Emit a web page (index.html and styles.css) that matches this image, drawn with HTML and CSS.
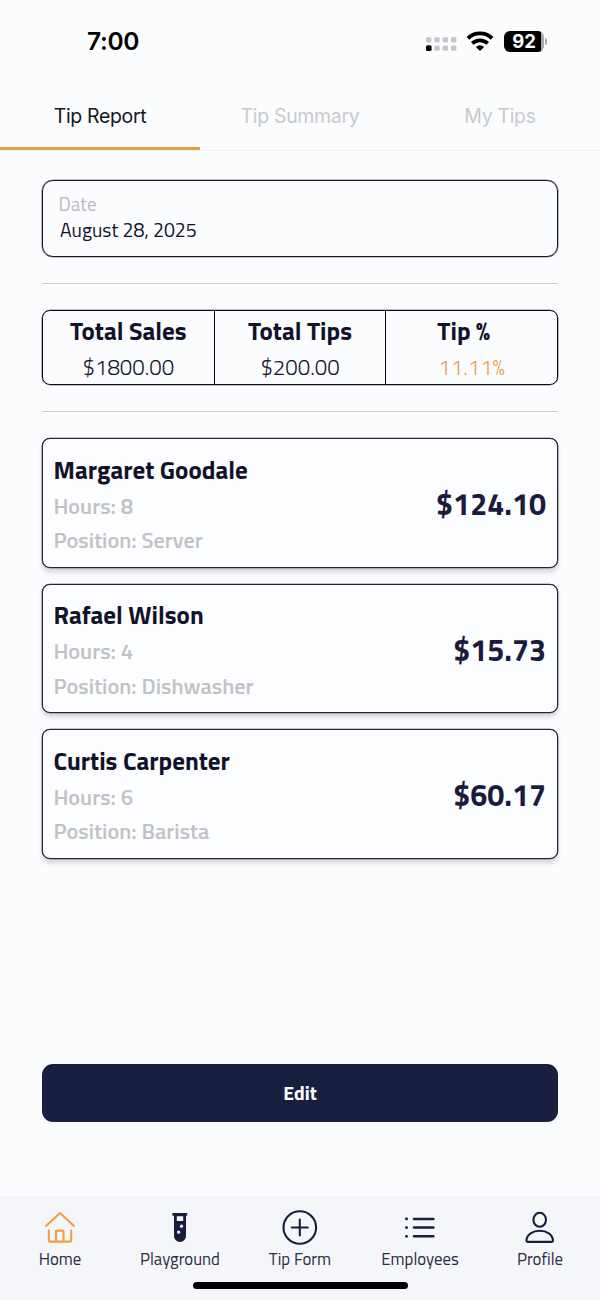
FILE: index.html
```html
<!DOCTYPE html>
<html lang="en">
<head>
    <meta charset="UTF-8">
    <meta name="viewport" content="width=device-width, initial-scale=1.0">
    <title>Tip Report</title>
    <link rel="stylesheet" href="styles.css">
</head>
<body>
    <!-- Status bar -->
    <header class="status-bar">
        <span class="time">7:00</span>
        <div class="status-icons">
            <svg class="signal" width="32" height="15" viewBox="0 0 32 15" fill="#c6c7ca">
                <rect x="0" y="0" width="5.4" height="5.4" rx="1.5"/>
                <rect x="8.3" y="0" width="5.4" height="5.4" rx="1.5"/>
                <rect x="16.6" y="0" width="5.4" height="5.4" rx="1.5"/>
                <rect x="25" y="0" width="5.4" height="5.4" rx="1.5"/>
                <rect x="0" y="8.2" width="5.6" height="5.8" rx="1.5" fill="#000"/>
                <rect x="8.3" y="8.4" width="5.4" height="5.4" rx="1.5"/>
                <rect x="16.6" y="8.4" width="5.4" height="5.4" rx="1.5"/>
                <rect x="25" y="8.4" width="5.4" height="5.4" rx="1.5"/>
            </svg>
            <svg class="wifi" width="28" height="20" viewBox="0 0 28 20">
                <g fill="none" stroke="#000" stroke-width="3.9">
                    <path d="M1.9 7.3a17.4 17.4 0 0 1 24.2 0"/>
                    <path d="M6.3 12.4a11.2 11.2 0 0 1 15.4 0"/>
                </g>
                <path d="M14 20l-4.1-4.1a6 6 0 0 1 8.2 0z"/>
            </svg>
            <div class="battery">
                <span class="battery-level">92</span>
                <span class="battery-tip"></span>
            </div>
        </div>
    </header>

    <!-- Top tabs -->
    <nav class="tabs">
        <a class="tab active">Tip Report</a>
        <a class="tab">Tip Summary</a>
        <a class="tab">My Tips</a>
    </nav>

    <main class="content">
        <div class="date-field">
            <label class="date-label">Date</label>
            <span class="date-value">August 28, 2025</span>
        </div>

        <hr class="divider">

        <section class="totals">
            <div class="total">
                <h2>Total Sales</h2>
                <p>$1800.00</p>
            </div>
            <div class="total">
                <h2>Total Tips</h2>
                <p>$200.00</p>
            </div>
            <div class="total percent">
                <h2>Tip %</h2>
                <p>11.11%</p>
            </div>
        </section>

        <hr class="divider">

        <!-- Employee cards -->
        <section class="cards">
            <div class="card">
                <div class="details">
                    <h3>Margaret Goodale</h3>
                    <p>Hours: 8</p>
                    <p>Position: Server</p>
                </div>
                <span class="amount">$124.10</span>
            </div>
            <div class="card">
                <div class="details">
                    <h3>Rafael Wilson</h3>
                    <p>Hours: 4</p>
                    <p>Position: Dishwasher</p>
                </div>
                <span class="amount">$15.73</span>
            </div>
            <div class="card">
                <div class="details">
                    <h3>Curtis Carpenter</h3>
                    <p>Hours: 6</p>
                    <p>Position: Barista</p>
                </div>
                <span class="amount">$60.17</span>
            </div>
        </section>

        <button class="edit-button">Edit</button>
    </main>

    <!-- Bottom navigation -->
    <nav class="bottom-nav">
        <div class="nav-items">
            <a class="nav-item home">
                <svg width="36" height="36" viewBox="0 0 36 36" fill="none" stroke="#f39c3d" stroke-width="2.1" stroke-linecap="round" stroke-linejoin="round">
                    <path d="M4 17L18 4L32 17"/>
                    <path d="M6.8 21.5V31Q6.8 32.6 8.4 32.6H27.6Q29.2 32.6 29.2 31V21.5"/>
                    <path d="M14 32V22.6Q14 21.6 15 21.6H20.5Q21.5 21.6 21.5 22.6V32"/>
                </svg>
                <span>Home</span>
            </a>
            <a class="nav-item playground">
                <svg width="36" height="36" viewBox="0 0 36 36">
                    <path fill="#171d3d" fill-rule="evenodd" d="M10.4 4H25.2V6.8H24V27A6 6 0 0 1 12 27V6.8H10.4zM14.8 7.2V12H21.2V7.2z"/>
                    <circle cx="19.5" cy="17.2" r="1.6" fill="#f5f6fa"/>
                    <circle cx="16.6" cy="23.2" r="1.6" fill="#f5f6fa"/>
                </svg>
                <span>Playground</span>
            </a>
            <a class="nav-item tip-form">
                <svg width="36" height="36" viewBox="0 0 36 36" fill="none" stroke="#171d3d" stroke-width="2.1" stroke-linecap="round">
                    <circle cx="17.8" cy="18.5" r="16.3"/>
                    <path d="M9.8 18.5H25.8M17.8 10.5V26.5"/>
                </svg>
                <span>Tip Form</span>
            </a>
            <a class="nav-item employees">
                <svg width="36" height="36" viewBox="0 0 36 36" fill="none" stroke="#171d3d" stroke-width="2.5" stroke-linecap="round">
                    <path d="M12 9.9H31.4M12 18.6H31.4M12 27.3H31.4"/>
                    <path d="M4.4 9.9H4.6M4.4 18.6H4.6M4.4 27.3H4.6" stroke-width="2.8"/>
                </svg>
                <span>Employees</span>
            </a>
            <a class="nav-item profile">
                <svg width="36" height="36" viewBox="0 0 36 36" fill="none" stroke="#171d3d" stroke-width="2.1" stroke-linejoin="round">
                    <ellipse cx="17.7" cy="10.8" rx="6.3" ry="7"/>
                    <path d="M5.7 32.9Q4.4 32.9 4.4 31.6C4.8 25.4 10.7 21.7 17.7 21.7S30.6 25.4 31 31.6Q31 32.9 29.7 32.9z"/>
                </svg>
                <span>Profile</span>
            </a>
        </div>
        <div class="home-indicator"></div>
    </nav>
</body>
</html>
```

FILE: styles.css
```css
* {
    box-sizing: border-box;
}

body {
    font-family: "Titillium Web", Roboto, "Open Sans", sans-serif;
    background-color: #fbfcfe;
    color: #12132a;
    margin: 0;
    height: 1300px;
    display: flex;
    flex-direction: column;
}

h2, h3, p {
    margin: 0;
}

.status-bar {
    display: flex;
    justify-content: space-between;
    align-items: center;
    height: 82px;
    padding: 0 53px 0 87px;
    font-family: Inter, sans-serif;
    color: #000;
}

.time {
    font-size: 24.5px;
    font-weight: 600;
    letter-spacing: -0.3px;
}

.status-icons {
    display: flex;
    align-items: center;
}

.signal {
    margin: 6px 8px 0 0;
}

.wifi {
    margin-right: 10px;
}

.battery {
    display: flex;
    align-items: center;
}

.battery-level {
    width: 40px;
    height: 21px;
    border-radius: 6px;
    background: linear-gradient(to right, #000 92%, #a9a9ab 92%);
    color: #fff;
    font-size: 18.5px;
    font-weight: 700;
    line-height: 21px;
    text-align: center;
}

.battery-tip {
    width: 2px;
    height: 7px;
    margin-left: 1px;
    border-radius: 0 2px 2px 0;
    background-color: #a9a9ab;
}

.tabs {
    display: flex;
    height: 69px;
    box-shadow: inset 0 -1px #eeeff1;
}

.tab {
    flex: 1;
    display: flex;
    align-items: center;
    justify-content: center;
    height: 68px;
    padding-top: 3px;
    border-bottom: 3px solid transparent;
    font-family: Inter, sans-serif;
    font-size: 19.5px;
    letter-spacing: -0.33px;
    color: #c9cacd;
}

.tab.active {
    color: #16171b;
    border-bottom-color: #e6a04d;
}

.content {
    flex: 1;
    display: flex;
    flex-direction: column;
    padding: 29px 42px 74px;
}

.date-field {
    display: flex;
    flex-direction: column;
    height: 77px;
    padding: 10px 15.5px;
    border: 1px solid #15152a;
    border-radius: 11px;
    box-shadow: 0 0 0 0.3px #15152a;
    font-size: 19.5px;
    line-height: 26px;
}

.date-label {
    font-size: 19px;
    color: #b9bac0;
}

.date-value {
    padding-left: 1.5px;
}

.divider {
    width: 100%;
    height: 1px;
    margin: 26px 0;
    border: none;
    background-color: #cbccce;
}

.totals {
    display: flex;
    height: 75px;
    border: 1px solid #0c0c14;
    border-radius: 8px;
    box-shadow: 0 0 0 0.3px #0c0c14;
}

.total {
    flex: 1;
    text-align: center;
    border-right: 1px solid #0c0c14;
}

.total:last-child {
    border-right: none;
}

.total h2 {
    padding-top: 2px;
    font-size: 25px;
    line-height: 36px;
}

.total p {
    font-size: 22.2px;
    font-weight: 300;
    line-height: 36px;
}

.percent h2 {
    padding-right: 16px;
}

.percent p {
    color: #ec9f4a;
}

.cards {
    display: flex;
    flex-direction: column;
    gap: 16px;
}

.card {
    display: flex;
    justify-content: space-between;
    align-items: center;
    height: 129.5px;
    padding: 3px 11px 0 10.5px;
    border: 1px solid #25233d;
    border-radius: 8px;
    background-color: #fcfdff;
    box-shadow: 0 0 0 0.3px #25233d, 0 4px 5px rgba(0, 0, 0, 0.16);
}

.details h3 {
    font-size: 25px;
    line-height: 38px;
}

.details p {
    font-size: 22.2px;
    font-weight: 600;
    line-height: 34.5px;
    color: #c1c2c4;
}

.amount {
    font-size: 30.4px;
    font-weight: 700;
    color: #1b1c3c;
}

.edit-button {
    margin-top: auto;
    height: 58px;
    padding-bottom: 1px;
    border: none;
    border-radius: 11px;
    background-color: #181f3f;
    color: #fff;
    font-family: inherit;
    font-size: 19.5px;
    font-weight: 700;
}

.bottom-nav {
    display: flex;
    flex-direction: column;
    align-items: center;
    height: 104px;
    background-color: #f5f6fa;
}

.nav-items {
    display: flex;
    width: 100%;
    height: 85.5px;
    padding-top: 13px;
}

.nav-item {
    flex: 1;
    display: flex;
    flex-direction: column;
    align-items: center;
    font-size: 16.8px;
    line-height: 28px;
    color: #292d45;
}

.home-indicator {
    width: 215px;
    height: 7px;
    border-radius: 4px;
    background-color: #000;
}
```
